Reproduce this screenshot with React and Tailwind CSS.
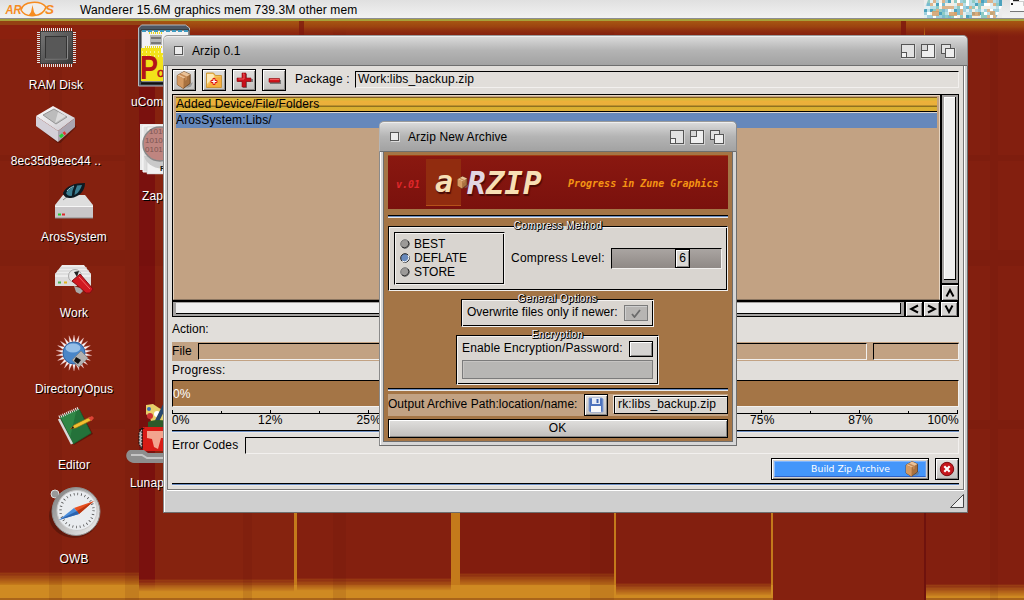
import React from "react";

const RAISED = "border border-black shadow-[inset_1px_1px_0_#ffffff,inset_-1px_-1px_0_#8a8886]";

/* ---------- small drawings ---------- */

function Box({ className }) {
  return (
    <svg viewBox="0 0 16 16" className={className}>
      <path d="M12 12l4-2-2 4-4 1z" fill="#777" opacity=".6" />
      <path d="M2 4l6-3.500 5.500 2.500v8L7.500 15.500 2 12z" fill="#a8713f" stroke="#5b3a1c" strokeWidth=".7" />
      <path d="M2 4l6-3.500 5.500 2.500-5.800 3.600z" fill="#eac298" />
      <path d="M2 4l5.700 2.600-.2 8.900L2 12z" fill="#d59a62" />
      <path d="M5 2.300l5.600 2.500v3l-1.500.8V5.700L3.500 3.200z" fill="#c58a55" />
    </svg>
  );
}

function FolderPlus() {
  return (
    <svg viewBox="0 0 18 18" className="h-[18px] w-[18px]">
      <path d="M1.500 16.500V2h7l2 2.500h6v12z" fill="#f3c25a" stroke="#c58a22" strokeWidth=".8" />
      <path d="M2 16L9 7l7-1.500V16z" fill="#f8a836" opacity=".8" />
      <path d="M2 3h6l1.500 2.500L2 13z" fill="#fff4cf" opacity=".8" />
      <path d="M8 7.500h2v2h2v2h-2v2H8v-2H6v-2h2z" fill="#fff" stroke="#e01818" strokeWidth="1" />
    </svg>
  );
}

function Plus() {
  return (
    <svg viewBox="0 0 18 18" className="h-[18px] w-[18px]">
      <path d="M8 3h4v5h6v3h-6v6H8v-6H3V8h5z" fill="#555" opacity=".7" />
      <path d="M7 2h4v5h5v3.500h-5V16H7v-5.500H2V7h5z" fill="#c8101a" stroke="#8e0c10" strokeWidth=".6" />
      <path d="M8 3h1v5H3.500" fill="none" stroke="#f0595c" />
    </svg>
  );
}

function Minus() {
  return (
    <svg viewBox="0 0 18 18" className="h-[18px] w-[18px]">
      <path d="M5 9h11v4H5z" fill="#555" opacity=".7" />
      <path d="M4 7.500h10.500v3.700H4z" fill="#d3141b" stroke="#8e0c10" strokeWidth=".6" />
      <path d="M5 8.500h9" stroke="#f0595c" />
    </svg>
  );
}

function Floppy() {
  return (
    <svg viewBox="0 0 16 16" className="h-4 w-4">
      <path d="M1 1h13l1 1v13H2l-1-1z" fill="#4f74bd" stroke="#8ba3d4" />
      <path d="M4 1h8v6H4z" fill="#e6ebf5" />
      <path d="M8.500 2h2v4h-2z" fill="#3f65b0" />
      <path d="M3 9h10v6H3z" fill="#fafafa" />
    </svg>
  );
}

function Gadgets() {
  return (
    <svg viewBox="0 0 56 16" className="h-4 w-14" shapeRendering="crispEdges">
      <g fill="#e2e2e2" stroke="#555" strokeWidth="1">
        <path d="M1.500 1.500h13v13h-13z" />
        <path d="M1.500 9.500h5v5h-5z" fill="#f2f2f2" />
        <path d="M21.500 1.500h13v13h-13z" fill="#efefef" />
        <path d="M21.500 1.500h6v6h-6z" fill="#d8d8d8" />
        <path d="M41.500 1.500h9v9h-9z" />
        <path d="M45.500 5.500h9v9h-9z" fill="#eee" />
      </g>
      <path d="M15.500 1v14.500H1M35.500 1v14.500H21M55.500 5v10.500H45" fill="none" stroke="#d4d4d4" />
    </svg>
  );
}

function Chevron({ d }) {
  return (
    <div className={"flex h-full w-full items-center justify-center bg-[#d6d4d2] shadow-[inset_1px_1px_0_#fff,inset_-1px_-1px_0_#8a8886]"}>
      <svg viewBox="0 0 10 10" className="h-[10px] w-[10px]">
        <path d={d} fill="none" stroke="#000" strokeWidth="2" />
      </svg>
    </div>
  );
}

/* ---------- desktop ---------- */

const COLS = [
  [0, 139, 584, "#85210f"],
  [139, 155, 591, "#7a110e"],
  [155, 294, 591, "#86230f"],
  [297, 451, 590, "#84200f"],
  [460, 614, 585, "#821d0e"],
  [616, 771, 595, "#831f0f"],
  [773, 924, 620, "#85210f"],
  [925, 1024, 596, "#831f0f"],
];

function Wallpaper() {
  return (
    <svg viewBox="0 0 1024 600" className="block h-[600px] w-[1024px]">
      <defs>
        <linearGradient id="top" x1="0" y1="0" x2="0" y2="1">
          <stop offset="0" stopColor="#a85a12" />
          <stop offset=".4" stopColor="#9c4310" />
          <stop offset="1" stopColor="#8c260f" stopOpacity="0" />
        </linearGradient>
      </defs>
      <rect width="1024" height="600" fill="#c47a1b" />
      <rect y="585" width="1024" height="13" fill="#cf8a22" />
      <rect y="598" width="1024" height="2" fill="#a9641a" />
      {COLS.map(([a, b, y, c], i) => (
        <g key={i}>
          <rect x={a} y="0" width={b - a} height={y - 12} fill={c} />
          {[0, 1, 2, 3, 4, 5, 6, 7].map((k) => (
            <rect key={k} x={a} y={y - 12 + k * 1.5} width={b - a} height="1.600" fill={c} opacity={1 - (k + 1) / 9} />
          ))}
        </g>
      ))}
      <rect x="290" y="0" width="490" height="200" fill="#84200f" />
      <g fill="#5a100a" opacity=".1">
        <rect x="49" width="13" height="600" />
        <rect x="125" width="14" height="600" />
        <rect x="243" width="9" height="600" />
        <rect x="333" width="13" height="600" />
        <rect x="590" width="24" height="600" />
        <rect x="990" width="8" height="600" />
        <rect y="250" width="1024" height="16" />
        <rect y="420" width="1024" height="9" />
        <rect y="155" width="1024" height="6" />
      </g>
      <rect x="924" y="500" width="2" height="100" fill="#6f120d" />
      <rect x="0" y="21" width="300" height="18" fill="#8c200e" opacity=".8" />
      <rect x="0" y="21" width="150" height="4" fill="#9b5a18" opacity=".6" />
      <rect x="150" y="20" width="874" height="17" fill="url(#top)" />
      <rect x="299" y="20" width="5" height="16" fill="#7c150e" opacity=".7" />
      <rect x="901" y="20" width="5" height="16" fill="#7c150e" opacity=".8" />
    </svg>
  );
}

function DesktopIcon({ place, label, align = "items-center", children }) {
  return (
    <div className={"absolute flex flex-col " + align + " " + place}>
      {children}
      <span className="whitespace-nowrap text-[12px] leading-[14px] tracking-[0.12px] text-white [text-shadow:1px_1px_0_#000]">
        {label}
      </span>
    </div>
  );
}

function Chip() {
  return (
    <svg viewBox="0 0 40 40" className="h-10 w-10">
      <defs>
        <linearGradient id="chip" x1="0" y1="0" x2="1" y2="1">
          <stop offset="0" stopColor="#777" />
          <stop offset="1" stopColor="#383838" />
        </linearGradient>
      </defs>
      <path d="M5 3h32M5 38h32" stroke="#e2e2e2" strokeWidth="4" strokeDasharray="1 1" />
      <path d="M3 5v32M38 5v32" stroke="#e2e2e2" strokeWidth="4" strokeDasharray="1 1" />
      <rect x="4.500" y="4.500" width="32" height="32" fill="url(#chip)" stroke="#3c3c3c" />
      <rect x="9.500" y="9.500" width="21" height="22" fill="#585858" stroke="#333" />
      <path d="M9 32h22.500V9" fill="none" stroke="#8a8a8a" />
    </svg>
  );
}

function Drive() {
  return (
    <svg viewBox="0 0 42 38" className="h-[38px] w-[42px]">
      <defs>
        <linearGradient id="dtop" x1="0" y1="0" x2="1" y2="1">
          <stop offset="0" stopColor="#fff" />
          <stop offset="1" stopColor="#c9c6cc" />
        </linearGradient>
      </defs>
      <path d="M4 22l20 16 17-17" fill="none" stroke="#000" strokeWidth="2" opacity=".25" />
      <path d="M1 11L18 1l22 12-17 13z" fill="url(#dtop)" />
      <path d="M1 11l22 15v11L1 21z" fill="#d4d0d8" />
      <path d="M23 26l17-13v9L23 37z" fill="#aaa5b0" />
      <path d="M8 10l11-6 13 8-11 7z" fill="#bcbcbc" stroke="#959595" />
      <path d="M20 18l11-7-8-4z" fill="#dcdcdc" />
      <path d="M25 32l3-2.500" stroke="#29cf36" strokeWidth="3" />
      <path d="M28.500 29l2-1.500" stroke="#e23434" strokeWidth="3" />
    </svg>
  );
}

function SystemDrive() {
  return (
    <svg viewBox="0 0 40 38" className="h-[38px] w-10">
      <path d="M9 13h22l8 10v13H1V23z" fill="#dedede" />
      <path d="M1 24h38v12H1z" fill="#c9c7c9" />
      <path d="M1 24.500h38" stroke="#f7f7f7" />
      <path d="M1 36h38" stroke="#8b8b8b" />
      <path d="M4 32.500h3" stroke="#26c92e" strokeWidth="2" />
      <path d="M8 32.500h3" stroke="#da2b2b" strokeWidth="2" />
      <path d="M9 18l5-4" stroke="#888" />
      <path d="M9 11C12 4 20 1 31 1c0 8-6 14-14 15-5 0-7-1-8-5z" fill="#0d1a22" />
      <path d="M12 11C15 6 21 3 28 3c-2 6-5 10-11 11-3 0-4-1-5-3z" fill="#3b7d90" />
      <path d="M19 15c0-5 1-8 3-12" stroke="#0b1a22" strokeWidth="2.500" fill="none" />
      <path d="M13 9c2-3 5-4 7-5" stroke="#9fc8d2" fill="none" />
    </svg>
  );
}

function WorkDrive() {
  return (
    <svg viewBox="0 0 40 32" className="h-8 w-10">
      <path d="M8 2h22l7 9v12H1V11z" fill="#ededed" />
      <path d="M1 11h36M3 8h32M6 5h27" stroke="#cfcfcf" fill="none" />
      <path d="M1 14h36v9H1z" fill="#dcdcdc" />
      <path d="M4 19.500h3" stroke="#4ab04e" strokeWidth="2" />
      <path d="M10 19.500h3" stroke="#e0b321" strokeWidth="2" />
      <circle cx="21" cy="13" r="6.500" fill="#e6e6e6" stroke="#aaa" />
      <path d="M20 9l5-1-2 6z" fill="#222" />
      <path d="M18 18l8-7 13 15-3 4h-4l-8-7z" fill="#d01820" stroke="#840e12" />
      <path d="M25 14l11 12" stroke="#f46a68" />
      <path d="M20 23l6 2 3 3-3 3-4-2z" fill="#a9a9a9" />
    </svg>
  );
}

function Opus() {
  const rays = Array.from({ length: 22 }, (_, i) => (i * 360) / 22);
  return (
    <svg viewBox="0 0 38 38" className="h-[38px] w-[38px]">
      {rays.map((r) => (
        <path key={r} d="M17 11l2-10 2 10z" fill="#fbf4f4" stroke="#e0a0a0" strokeWidth=".3" transform={`rotate(${r} 19 19)`} />
      ))}
      <circle cx="19" cy="19" r="11" fill="#4a86c8" stroke="#2d5f9e" />
      <ellipse cx="18" cy="14" rx="7.500" ry="4.500" fill="#a9cdf0" opacity=".8" />
      <path d="M26 17l7 7-9 9-7-7z" fill="#b2b2b2" stroke="#777" strokeWidth=".6" />
      <path d="M21 23l5 3-3 4-4-3z" fill="#111" />
    </svg>
  );
}

function Notebook() {
  return (
    <svg viewBox="0 0 40 40" className="h-10 w-10">
      <path d="M5 13L24 3l13 24-19 11z" fill="#000" opacity=".3" />
      <path d="M4 10L23 2l12 24-18 11z" fill="#2f8746" stroke="#1c5c2d" />
      <path d="M20 5l3-2 12 23-18 11-3-6z" fill="#1f6a35" opacity=".7" />
      <path d="M3 10L23 1" stroke="#eee" strokeWidth="3" strokeDasharray="1 1" />
      <path d="M3 12l13 25" stroke="#d8d8d8" strokeWidth="2.500" />
      <path d="M14 22l4-4 16-8 2 3-16 8z" fill="#f1c02f" stroke="#8a6413" strokeWidth=".6" />
      <path d="M32 11l4-2 2 2-2.500 3z" fill="#df4437" />
      <path d="M15 22l3-1-1-2z" fill="#111" />
    </svg>
  );
}

function Compass() {
  return (
    <svg viewBox="0 0 54 54" className="h-[54px] w-[54px]">
      <defs>
        <linearGradient id="ring" x1="0" y1="0" x2="1" y2="1">
          <stop offset="0" stopColor="#777" />
          <stop offset=".5" stopColor="#bbb" />
          <stop offset="1" stopColor="#f4f4f4" />
        </linearGradient>
      </defs>
      <ellipse cx="26" cy="30" rx="25" ry="22" fill="#000" opacity=".25" />
      <circle cx="7" cy="8" r="4" fill="#999" stroke="#ddd" />
      <circle cx="28" cy="25.500" r="24" fill="url(#ring)" stroke="#8d8d8d" />
      <circle cx="29" cy="24.500" r="20" fill="#e9ecef" stroke="#ccc" />
      <circle cx="29" cy="24.500" r="16.500" fill="none" stroke="#444" strokeWidth="2.500" strokeDasharray=".7 3" />
      <path d="M46 15L31 28l-5-6z" fill="#e8501f" />
      <path d="M11 34l20-6-5-6z" fill="#4a8edb" />
      <path d="M46 15L29 25l2 3z" fill="#b83612" />
      <path d="M11 34l18-9 2 3z" fill="#2b62ad" />
    </svg>
  );
}

function PortIcon() {
  return (
    <svg viewBox="0 0 54 64" className="h-16 w-[54px]">
      <path d="M1.500 62V4l3-3h44l4 3v58z" fill="#4c5662" stroke="#b4b8bf" />
      <path d="M4 6h48v52H4z" fill="#f2f2f2" stroke="#222" />
      <path d="M4 24h20v5h28v28H4z" fill="#f2e21a" />
      <path d="M5 7h46" stroke="#3e9ac0" strokeWidth="2" strokeDasharray="4 2" />
      <path d="M13 11h12v10H13z" fill="#b5b5b5" />
      <path d="M14 14h10M14 19h10" stroke="#777" strokeWidth="2" />
      <path d="M12 9h14M8 23h18" stroke="#e8d820" strokeWidth="2" strokeDasharray="1 1" />
      <path d="M5 28h20M5 32h22" stroke="#fff" strokeWidth="1" strokeDasharray="1 3" />
      <text x="3" y="55" fontFamily="Liberation Sans" fontWeight="bold" fontSize="33" textLength="18" lengthAdjust="spacingAndGlyphs" fill="#b3121a">P</text>
      <text x="20" y="53" fontFamily="Liberation Sans" fontSize="13" fill="#b3121a" stroke="#b3121a" strokeWidth=".5">o</text>
      <path d="M4 59.500h48" stroke="#111" strokeWidth="2" />
    </svg>
  );
}

function ZapIcon() {
  return (
    <svg viewBox="0 0 40 52" className="h-[52px] w-10">
      <path d="M0 1h40v46H0z" fill="#e9e9e9" />
      <path d="M3 3h37v46H3z" fill="#dedede" stroke="#fafafa" />
      <path d="M7 4h33v47H7z" fill="#f1f1f1" stroke="#c4c4c4" strokeWidth=".5" />
      <path d="M4 33c4 14 22 15 36 11V33z" fill="#c9c9c9" />
      <circle cx="20" cy="21" r="17" fill="#bf8580" stroke="#888" strokeWidth="1.500" />
      <g fontFamily="Liberation Sans" fontSize="8" fill="#7d5552">
        <text x="9" y="11">1010</text>
        <text x="5" y="20">10101</text>
        <text x="5" y="29">01010</text>
      </g>
      <text x="20" y="48" fontFamily="Liberation Sans" fontSize="8" fontWeight="bold" fill="#111">R</text>
    </svg>
  );
}

function LunaIcon() {
  return (
    <svg viewBox="0 0 50 64" className="h-16 w-[50px]">
      <path d="M20 3l7-1 6 4 8 4v16H22l3-8-5-6z" fill="#e8d06a" />
      <circle cx="24" cy="14" r="3" fill="#c33" />
      <circle cx="23" cy="7" r="2" fill="#3a6fb8" />
      <circle cx="31" cy="12" r="3" fill="#fff" />
      <path d="M40 1l-9 18" stroke="#27486d" strokeWidth="4" />
      <path d="M22 20c8-3 14-2 28 0v6H22z" fill="#2d5a2a" />
      <path d="M17 25h33v24H17z" fill="#d81c16" />
      <path d="M16 26v21l-3-5V31zM13 28l6-2" fill="#b9b9b9" stroke="#111" strokeDasharray="2 1" />
      <path d="M21 29h29v7h-4l-4 9-3-9h-4l-3 11-4-2-2-8-5-1z" fill="#f3a48e" />
      <path d="M4 48h14l4 3h28v10H8c-9-1-10-11-4-13z" fill="#8e8e8e" />
      <path d="M5 53h11l5 3h28" stroke="#c5c5c5" strokeWidth="2" fill="none" />
    </svg>
  );
}

const TINTS = ["#dff0f4", "#9fd0de", "#4ba2bd", "#b9dfe8", "#f4f0e6", "#dcb48c", "#79bcd0", "#ffffff", "#8fcbc4"];

function Mosaic() {
  const cells = [];
  for (let y = 0; y < 6; y++)
    for (let x = 0; x < 26; x++) {
      const h = Math.sin(x * 12.9898 + y * 78.233) * 43758.5453;
      const k = Math.floor((h - Math.floor(h)) * TINTS.length);
      cells.push(<rect key={x + "-" + y} x={x * 3} y={y * 3} width="3.100" height="3.100" fill={TINTS[k]} />);
    }
  return (
    <svg viewBox="0 0 78 18" className="h-[18px] w-[78px]">
      {cells}
      <path d="M0 0h4L0 10zM78 6v12h-6z" fill="#ececec" />
      <path d="M8 11h7v5H8zM25 12h8v4h-8zM48 12h8v4h-8zM66 11h5v4h-5z" fill="#d39b62" opacity=".8" />
    </svg>
  );
}

function ScreenBar() {
  return (
    <div className="absolute inset-x-0 top-0 flex h-[21px] flex-col">
      <div className="flex h-[18px] items-center bg-gradient-to-b from-[#e0e0e0] to-[#f2f2f2]">
        <svg viewBox="0 0 80 18" className="h-[18px] w-20">
          <g fontFamily="Liberation Sans" fontWeight="bold" fontStyle="italic" fontSize="13.500" fill="#f68b1f">
            <text x="5.500" y="14" textLength="16" lengthAdjust="spacingAndGlyphs">AR</text>
            <text x="45" y="14">S</text>
          </g>
          <path d="M21 10C23 1 40 0 46 7 43 17 26 19 21 10z" fill="#f1eeea" stroke="#f68b1f" strokeWidth="1.500" />
          <path d="M32.500 5l1.500 7 2.500 3.500h-8l2.500-3.500z" fill="#f68b1f" />
        </svg>
        <span className="grow whitespace-nowrap pt-[2px] text-[12px] leading-[18px] tracking-[0.13px] text-black">
          Wanderer 15.6M graphics mem 739.3M other mem
        </span>
        <div className="mr-2 flex">
          <Mosaic />
        </div>
        <svg viewBox="0 0 14 18" className="h-[18px] w-[14px]" shapeRendering="crispEdges">
          <path d="M0 0h14v11H0z" fill="#fafafa" />
          <path d="M0 11.500h14" stroke="#777" />
          <path d="M3 0h6v1H3zM1 3h2v2H1z" fill="#222" />
          <path d="M3 1.500h10v4" fill="none" stroke="#ccc" />
        </svg>
      </div>
      <div className="h-px bg-[#8d8d92]" />
      <div className="h-[2px] bg-[#a7a03a]" />
    </div>
  );
}

/* ---------- window parts ---------- */

function TitleBar({ title, className }) {
  return (
    <div className={"flex h-[31px] shrink-0 items-center rounded-t-[5px] border border-b-[#6e6e6e] border-l-[#b5b5b5] border-r-[#8a8a8a] border-t-[#9a9a9a] bg-gradient-to-b from-[#dcdcdc] via-[#b4b4b4] to-[#a2a2a2] pr-[11px] shadow-[inset_0_1px_0_#eee] " + className}>
      <div className="h-[9px] w-[9px] border border-[#555] bg-[#ececec] shadow-[1px_1px_0_#dcdcdc]" />
      <span className="grow pl-[9px] text-[12px] leading-[14px] tracking-[0.12px]">{title}</span>
      <Gadgets />
    </div>
  );
}

function Rule() {
  return (
    <div className="flex h-[3px] shrink-0 flex-col">
      <div className="h-px bg-black" />
      <div className="h-px bg-[#6a8cc0]" />
      <div className="h-px bg-[#e8e8e8]" />
    </div>
  );
}

function ToolButton({ children }) {
  return (
    <div className={"flex h-[22px] w-6 items-center justify-center bg-gradient-to-b from-[#e2e0de] to-[#c2c0be] " + RAISED}>
      {children}
    </div>
  );
}

const SUNKEN = "border border-b-[#f2f0ee] border-l-black border-r-[#f2f0ee] border-t-black";

function ScaleBar() {
  // The labels between 25% and 75% sit behind the dialog and stay empty.
  const labels = ["0%", "12%", "25%", "", "", "", "75%", "87%", "100%"];
  return (
    <div className="mt-[3px] flex h-[20px] shrink-0 flex-col">
      <svg viewBox="0 0 786 4" className="h-1 w-[786px] shrink-0" shapeRendering="crispEdges">
        <path d="M0 3h786v1H0z" />
        {Array.from({ length: 17 }, (_, i) => (
          <rect key={i} x={Math.min(785, Math.round(i * 49.06))} y={i % 2 ? 1 : 0} width="1" height="3" />
        ))}
      </svg>
      <div className="flex justify-between text-[12px] leading-[13px] tracking-[0.2px]">
        {labels.map((l, i) => (
          <span
            key={i}
            className={i === 0 ? "w-[49px] text-left" : i === 8 ? "w-[49px] text-right" : "w-[98px] text-center"}
          >
            {l}
          </span>
        ))}
      </div>
    </div>
  );
}

function FileList() {
  return (
    <div className="mt-[3px] flex h-[223px] shrink-0 flex-col border border-black bg-black">
      <div className="flex h-[205px] shrink-0">
        <div className="flex w-[767px] flex-col border border-[#e4d3c0] border-b-[#8a7560] bg-[#c2a283] pl-[2px] pr-[2px] pt-px">
          <div className="flex h-[14px] items-center bg-[linear-gradient(#7d5a1c_0,#7d5a1c_1px,#d9b83a_1px,#d9b83a_3px,#edb03a_4px,#eab03b_8px,#8f7020_9px,#8f7020_10px,#d8b030_10px,#dfae35_14px)] text-[12px] leading-[13px] tracking-[0.1px]">
            Added Device/File/Folders
          </div>
          <div className="h-px bg-black" />
          <div className="flex h-[16px] items-center border-t border-[#dcd4cc] bg-[#6688bb] text-[12px] leading-[15px] tracking-[0.15px]">
            ArosSystem:Libs/
          </div>
        </div>
        <div className="ml-[2px] flex w-4 flex-col">
          <div className="flex h-[188px] bg-[#a4a2a1] pb-[3px] pl-[2px] pr-[2px] pt-[2px]">
            <div className="grow border-b border-r border-black bg-[#efefef] shadow-[inset_1px_1px_0_#fff]" />
          </div>
          <div className="mt-[2px] h-[15px]">
            <Chevron d="M1.500 8.500L5 2l3.500 6.500" />
          </div>
        </div>
      </div>
      <div className="mt-[2px] flex h-[14px] gap-[2px]">
        <div className="flex w-[731px] bg-[#a4a2a1] pb-[2px] pl-[3px] pr-[3px] pt-px">
          <div className="grow border-b border-r border-black bg-[#efefef]" />
        </div>
        <div className="h-[14px] w-4">
          <Chevron d="M9 1.500L2 5l7 3.500" />
        </div>
        <div className="h-[14px] w-[15px]">
          <Chevron d="M1 1.500L8 5l-7 3.500" />
        </div>
        <div className="h-[14px] w-4">
          <Chevron d="M1.500 1.500L5 8l3.500-6.500" />
        </div>
      </div>
    </div>
  );
}

function MainWindow() {
  return (
    <div className="absolute left-[163px] top-[35px] flex h-[478px] w-[805px] flex-col">
      <TitleBar title="Arzip 0.1" className="pl-[10px]" />
      <div className="flex grow flex-col border border-t-0 border-[#6e6e6e] border-l-[#8a8a8a] bg-[#cfcfcf] shadow-[inset_1px_0_0_#fff]">
        <div className="ml-[3px] mr-[3px] flex h-[424px] flex-col border border-t-0 border-[#777] bg-[#e1deda] px-1 pt-[3px] shadow-[0_1px_0_#fff,1px_0_0_#fff]">
          <div className="flex h-[22px] shrink-0">
            <div className="flex gap-[6px]">
              <ToolButton><Box className="h-[18px] w-[18px]" /></ToolButton>
              <ToolButton><FolderPlus /></ToolButton>
              <ToolButton><Plus /></ToolButton>
              <ToolButton><Minus /></ToolButton>
            </div>
            <span className="w-[69px] pl-[9px] text-[12px] leading-[20px] tracking-[0.15px]">Package :</span>
            <div className={"mt-[2px] h-[17px] grow pl-[2px] text-[12px] leading-[15px] tracking-[0.15px] " + SUNKEN}>
              Work:libs_backup.zip
            </div>
          </div>
          <FileList />
          <div className="h-[25px] shrink-0 pt-[5px] text-[12px] leading-[14px] tracking-[0px]">Action:</div>
          <div className="flex h-[19px] shrink-0 bg-[#c2a283] py-px">
            <span className="w-[26px] text-[12px] leading-[17px] tracking-[0.1px]">File</span>
            <div className={"w-[669px] " + SUNKEN} />
            <div className={"ml-[6px] grow " + SUNKEN} />
          </div>
          <div className="h-[19px] shrink-0 pt-[2px] text-[12px] leading-[14px] tracking-[0.25px]">Progress:</div>
          <div className={"h-[27px] shrink-0 bg-[#a47546] text-[12px] leading-[26px] tracking-[0px] text-white " + SUNKEN}>0%</div>
          <ScaleBar />
          <Rule />
          <div className="mt-[4px] flex h-[17px] shrink-0">
            <span className="w-[73px] text-[12px] leading-[16px] tracking-[0.15px]">Error Codes</span>
            <div className={"grow " + SUNKEN} />
          </div>
          <div className="mt-[4px] flex shrink-0 justify-end gap-[6px]">
            <div className={"flex h-[22px] w-[158px] bg-[#d2d0ce] p-[2px] " + RAISED}>
              <div className="flex grow items-center justify-end border border-b-[#2d62c8] border-l-[#8abcff] border-r-[#6ca0ee] border-t-[#7db4ff] bg-[#4496fa] pr-[5px]">
                <span className="pr-[14px] font-['DejaVu_Sans'] text-[9.3px] leading-[14px] text-white">Build Zip Archive</span>
                <Box className="h-4 w-4" />
              </div>
            </div>
            <ToolButton>
              <svg viewBox="0 0 16 16" className="h-4 w-4">
                <circle cx="8" cy="8" r="6.700" fill="#c5161c" stroke="#7d0c10" />
                <path d="M5.300 5.300l5.400 5.400M10.700 5.300l-5.400 5.400" stroke="#fff" strokeWidth="2.200" />
              </svg>
            </ToolButton>
          </div>
          <div className="mt-[3px]"><Rule /></div>
        </div>
        <div className="flex grow items-end justify-end pb-[4px] pr-[3px]">
          <svg viewBox="0 0 14 14" className="h-[14px] w-[14px]">
            <path d="M13.500.5v13H.5z" fill="#eee" stroke="#444" />
          </svg>
        </div>
      </div>
    </div>
  );
}

function Group({ title, className, children }) {
  return (
    <div className={"relative border border-b-[#f2f0ee] border-l-black border-r-[#f2f0ee] border-t-black bg-[#d9d5d0] shadow-[inset_1px_1px_0_#f4f2f0,inset_-1px_-1px_0_#000] " + className}>
      <div className="absolute inset-x-0 -top-[7px] flex justify-center">
        <span className="bg-[linear-gradient(#a47546_6px,#d9d5d0_6px)] text-[10px] leading-[12px] tracking-[0.45px] text-white [text-shadow:1px_1px_0_#000,0_1px_0_#000,1px_0_0_#000]">{title}</span>
      </div>
      {children}
    </div>
  );
}

function Radio({ label, on }) {
  return (
    <div className="flex h-[14px] items-center gap-[4px] text-[12px] leading-[14px] tracking-[0px]">
      <svg viewBox="0 0 10 10" className="h-[10px] w-[10px]">
        <circle cx="5" cy="5" r="4.300" fill={on ? "#6688bb" : "#9c9a98"} stroke={on ? "#222" : "#777"} />
        <path d="M8 2a4.300 4.300 0 0 1-6 6" fill="none" stroke={on ? "#fff" : "#333"} />
      </svg>
      {label}
    </div>
  );
}

function Banner() {
  return (
    <div className="flex h-[54px] shrink-0 items-center border-t border-[#a33c12] bg-gradient-to-b from-[#8a1810] to-[#7a110d] font-['DejaVu_Sans_Mono'] italic">
      <span className="w-[38px] pl-2 pt-[3px] text-[10px] font-bold text-[#e0282c]">v.01</span>
      <div className="flex h-[47px] w-[35px] items-center border-b border-[#b5521a] bg-[#912c0f] pl-[9px]">
        <span className="pb-px text-[30px] font-bold leading-[40px] text-[#f7dfb4] [text-shadow:1px_2px_1px_#4a0b06]">a</span>
      </div>
      <div className="relative -ml-[5px]"><Box className="h-[15px] w-[13px]" /></div>
      <span className="-ml-[2px] w-[101px] pt-px text-[31px] font-bold leading-[40px] tracking-[0px] text-[#f7dfb4] [text-shadow:1px_2px_1px_#4a0b06]">
        <span className="text-[#e2d6e2]">R</span>ZIP
      </span>
      <span className="whitespace-nowrap pt-[2px] text-[10px] font-bold text-[#f59414]">Progress in Zune Graphics</span>
    </div>
  );
}

function Dialog() {
  return (
    <div className="absolute left-[379px] top-[121px] flex h-[325px] w-[358px] flex-col">
      <TitleBar title="Arzip New Archive" className="pl-[10px]" />
      <div className="flex grow flex-col border border-t-0 border-[#6e6e6e] border-l-[#8a8a8a] bg-[#d6d6d6] px-[3px] pb-[3px] shadow-[inset_1px_0_0_#fff]">
        <div className="flex grow flex-col border border-t-0 border-[#6e6e6e] bg-[#a47546] px-1 pt-[3px]">
          <Banner />
          <div className="mt-[6px]"><Rule /></div>
          <Group title="Compress Method" className="mt-[8px] h-[65px] shrink-0">
            <div className="flex pl-[5px] pt-[5px]">
              <div className="flex h-[53px] w-[111px] flex-col border border-b-[#f2f0ee] border-l-black border-r-[#f2f0ee] border-t-black pl-[5px] pt-[4px] shadow-[inset_1px_1px_0_#f4f2f0,inset_-1px_-1px_0_#000]">
                <Radio label="BEST" />
                <Radio label="DEFLATE" on />
                <Radio label="STORE" />
              </div>
              <span className="w-[106px] pl-[6px] pt-[19px] text-[12px] leading-[14px] tracking-[0.25px]">Compress Level:</span>
              <div className={"mt-[16px] flex h-[21px] w-[111px] bg-gradient-to-b from-[#aaa5a2] to-[#8f8985] pl-[63px] " + SUNKEN}>
                <div className={"h-[19px] w-[15px] bg-[#d9d7d4] text-center text-[12px] leading-[17px] " + RAISED}>6</div>
              </div>
            </div>
          </Group>
          <Group title="General Options" className="ml-[73px] mt-[8px] h-[28px] w-[193px] shrink-0">
            <div className="flex pl-[5px] pt-[5px]">
              <span className="w-[157px] whitespace-nowrap text-[12px] leading-[14px] tracking-[0.02px]">Overwrite files only if newer:</span>
              <div className="flex h-[16px] w-6 items-center justify-center border border-[#7b7b7b] bg-[#b7b5b3] shadow-[inset_1px_1px_0_#cfcfcf]">
                <svg viewBox="0 0 10 9" className="h-[9px] w-[10px]">
                  <path d="M1 5l2.500 3L9 1" fill="none" stroke="#6b6b6b" strokeWidth="1.800" />
                </svg>
              </div>
            </div>
          </Group>
          <Group title="Encryption" className="ml-[68px] mt-[8px] h-[50px] w-[203px] shrink-0">
            <div className="flex pl-[5px] pt-[5px]">
              <span className="w-[167px] whitespace-nowrap text-[12px] leading-[14px] tracking-[0.15px]">Enable Encryption/Password:</span>
              <div className={"h-[16px] w-6 bg-[#d5d3d1] " + RAISED} />
            </div>
            <div className="ml-[5px] mt-[3px] h-[19px] w-[191px] border border-[#7b7b7b] bg-[#b7b6b4] shadow-[inset_1px_1px_0_#c6c4c2]" />
          </Group>
          <div className="mt-[3px]"><Rule /></div>
          <div className="mt-[3px] flex h-[22px] shrink-0 bg-[#c2a283]">
            <span className="w-[196px] whitespace-nowrap text-[12px] leading-[20px] tracking-[0.04px]">Output Archive Path:location/name:</span>
            <ToolButton><Floppy /></ToolButton>
            <div className="ml-[6px] mt-[2px] h-[18px] grow border border-black bg-[#d9d5d0] pl-[3px] text-[12px] leading-[15px] tracking-[0.15px] shadow-[inset_1px_1px_0_#f6f4f2,-1px_-1px_0_#ece4dc]">
              rk:libs_backup.zip
            </div>
          </div>
          <div className={"mt-[3px] h-[19px] shrink-0 bg-gradient-to-b from-[#e0dfdd] to-[#c0bebc] pr-px text-center text-[12px] leading-[16px] " + RAISED}>OK</div>
        </div>
      </div>
    </div>
  );
}

export default function App() {
  return (
    <div className="relative h-[600px] w-[1024px] overflow-hidden bg-[#84200f] font-['Liberation_Sans',Arial,sans-serif] text-black">
      <Wallpaper />
      <ScreenBar />
      <DesktopIcon place="left-[-4px] top-[27px] w-[120px] gap-[11px]" label="RAM Disk"><Chip /></DesktopIcon>
      <DesktopIcon place="left-[-4px] top-[105px] w-[120px] gap-[11px]" label="8ec35d9eec44 .."><Drive /></DesktopIcon>
      <DesktopIcon place="left-[14px] top-[182px] w-[120px] gap-[10px]" label="ArosSystem"><SystemDrive /></DesktopIcon>
      <DesktopIcon place="left-[15px] top-[263px] w-[118px] gap-[11px]" label="Work"><WorkDrive /></DesktopIcon>
      <DesktopIcon place="left-[14px] top-[334px] w-[120px] gap-[10px]" label="DirectoryOpus"><Opus /></DesktopIcon>
      <DesktopIcon place="left-[14px] top-[407px] w-[120px] gap-[11px]" label="Editor">
        <div className="pl-[3px]"><Notebook /></div>
      </DesktopIcon>
      <DesktopIcon place="left-[14px] top-[486px] w-[120px] gap-[12px]" label="OWB">
        <div className="pl-[2px]"><Compass /></div>
      </DesktopIcon>
      <DesktopIcon place="left-[131px] top-[24px] gap-[7px]" align="items-start" label="uCom">
        <div className="pl-[6px]"><PortIcon /></div>
      </DesktopIcon>
      <DesktopIcon place="left-[140px] top-[123px] gap-[14px]" align="items-start" label={<span className="pl-[2px]">Zap</span>}>
        <ZapIcon />
      </DesktopIcon>
      <DesktopIcon place="left-[126px] top-[402px] gap-[10px]" align="items-start" label={<span className="pl-1">Lunap</span>}>
        <LunaIcon />
      </DesktopIcon>
      <MainWindow />
      <Dialog />
    </div>
  );
}
